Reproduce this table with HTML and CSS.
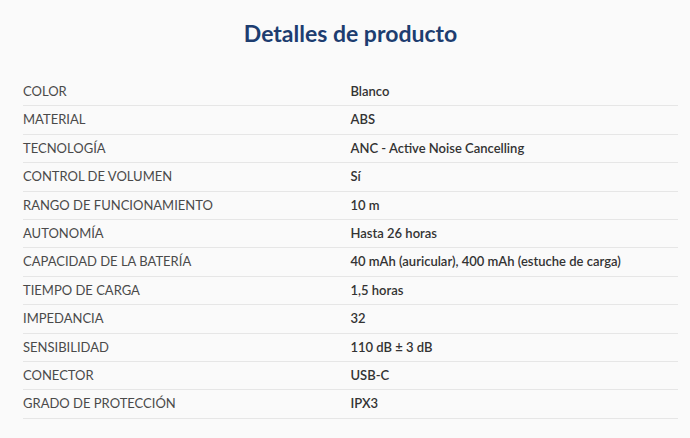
FILE: index.html
```html
<!DOCTYPE html>
<html lang="es">
<head>
<meta charset="utf-8">
<title>Detalles de producto</title>
<link rel="stylesheet" href="styles.css">
</head>
<body>
<section class="details">
  <h2 class="details-title">Detalles de producto</h2>
  <table class="spec-table">
    <tbody>
      <tr><th>Color</th><td>Blanco</td></tr>
      <tr><th>Material</th><td>ABS</td></tr>
      <tr><th>Tecnología</th><td>ANC - Active Noise Cancelling</td></tr>
      <tr><th>Control de volumen</th><td>Sí</td></tr>
      <tr><th>Rango de funcionamiento</th><td>10 m</td></tr>
      <tr><th>Autonomía</th><td>Hasta 26 horas</td></tr>
      <tr><th>Capacidad de la batería</th><td>40 mAh (auricular), 400 mAh (estuche de carga)</td></tr>
      <tr><th>Tiempo de carga</th><td>1,5 horas</td></tr>
      <tr><th>Impedancia</th><td>32</td></tr>
      <tr><th>Sensibilidad</th><td>110 dB ± 3 dB</td></tr>
      <tr><th>Conector</th><td>USB-C</td></tr>
      <tr><th>Grado de protección</th><td>IPX3</td></tr>
    </tbody>
  </table>
</section>
</body>
</html>
```
FILE: styles.css
```css
html, body {
  margin: 0;
  padding: 0;
  background: #fafafa;
}
body {
  font-family: Lato, "Open Sans", "Liberation Sans", sans-serif;
  color: #333;
}
.details {
  padding: 20px 12px 0 23px;
}
.details-title {
  margin: 0 0 32px;
  text-align: center;
  font-size: 23px;
  line-height: 26px;
  font-weight: 700;
  color: #1d3d70;
}
.spec-table {
  width: 100%;
  border-collapse: collapse;
  table-layout: fixed;
}
.spec-table th,
.spec-table td {
  width: 50%;
  padding: 5px 0;
  line-height: 17.4px;
  font-size: 13px;
  text-align: left;
  vertical-align: middle;
  border-bottom: 1px solid #e6e6e6;
}
.spec-table th {
  font-weight: 400;
  text-transform: uppercase;
  color: #4a4a4a;
}
.spec-table td {
  font-weight: 600;
  color: #333;
}
```
